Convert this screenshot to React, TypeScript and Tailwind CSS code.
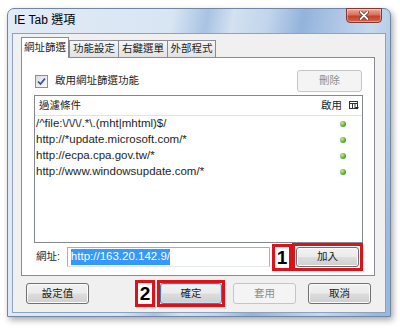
import React from 'react'
import clsx from 'clsx'

type BtnProps = {
  label: string
  disabled?: boolean
  focused?: boolean
  className?: string
}

const WinButton: React.FC<BtnProps> = ({ label, disabled, focused, className }) => (
  <div
    className={clsx(
      'flex items-center justify-center rounded-[3px] border text-[10.5px]',
      disabled && 'border-[#c3c6c9] bg-[#f4f4f4] text-[#8d8d8d]',
      !disabled &&
        'bg-[linear-gradient(#f2f2f2_0%,#ebebeb_48%,#dddddd_52%,#cfcfcf_100%)] text-[#1b1b1b]',
      !disabled && focused && 'border-[#3c7fb1] shadow-[inset_0_0_0_1px_#bfe3fa]',
      !disabled && !focused && 'border-[#707070] shadow-[inset_0_0_0_1px_#fbfbfb]',
      className,
    )}
  >
    {label}
  </div>
)

const Badge: React.FC<{ n: string }> = ({ n }) => (
  <div className="flex h-[27px] w-[20px] shrink-0 items-center justify-center border-[3px] border-[#dd1219] bg-white text-[19px] font-bold leading-none text-black">
    {n}
  </div>
)

const Dot = () => (
  <span className="block h-[6px] w-[6px] rounded-full bg-[radial-gradient(circle_at_35%_35%,#c4eea6_0%,#5fae37_55%,#2f6e19_100%)]" />
)

const rules = [
  '/^file:\\/\\/\\/.*\\.(mht|mhtml)$/',
  'http://*update.microsoft.com/*',
  'http://ecpa.cpa.gov.tw/*',
  'http://www.windowsupdate.com/*',
]

const tabs = [
  { label: '網址篩選', w: 'w-[48px]' },
  { label: '功能設定', w: 'w-[50px]' },
  { label: '右鍵選單', w: 'w-[50px] -ml-px' },
  { label: '外部程式', w: 'w-[49px] -ml-px' },
]

export default function App() {
  return (
    <div className="h-[329px] w-[400px] overflow-hidden bg-white pl-[7px] pt-[8px] font-['Liberation_Sans','Noto_Sans_CJK_TC',sans-serif] text-[#1e1e1e]">
      <div className="flex h-[309px] w-[384px] flex-col rounded-t-[7px] border border-[#6f87a5] bg-[linear-gradient(100deg,#e2ebf6_0%,#d8e5f3_38%,#a9c3e3_46%,#d3e1f1_52%,#c2d5ec_60%,#93b3db_68%,#aec6e5_76%,#c6d9ee_84%,#9ab8dd_97%)] px-[4px] pb-[3px] shadow-[2px_3px_6px_rgba(0,0,0,0.35)]">
        {/* title bar */}
        <div className="flex h-[24px] items-start justify-between">
          <span className="mt-[3px] pl-[2px] text-[12px] leading-[16px] text-black">IE Tab 選項</span>
          <div className="-mt-px mr-[4px] flex h-[15px] w-[36px] items-center justify-center rounded-b-[4px] border border-[#7b3a33] bg-[linear-gradient(#ebaa9c_0%,#d9715e_45%,#c24127_55%,#d2664c_100%)] shadow-[inset_0_0_0_1px_rgba(255,255,255,0.35)]">
            <svg width="10" height="9" viewBox="0 0 10 9">
              <path d="M1.5 1 L8.5 8 M8.5 1 L1.5 8" stroke="#5a1d16" strokeWidth="3.2" strokeLinecap="round" />
              <path d="M1.5 1 L8.5 8 M8.5 1 L1.5 8" stroke="#ffffff" strokeWidth="1.8" strokeLinecap="round" />
            </svg>
          </div>
        </div>

        {/* client area */}
        <div className="flex flex-1 flex-col border border-[#8da2bd] bg-[#f0f0f0] pt-[3px]">
          {/* tabs */}
          <div className="ml-[8px] flex h-[20px] items-end text-[10.5px]">
            {tabs.map((t, i) => (
              <div
                key={t.label}
                className={clsx(
                  'flex items-center justify-center border border-b-0 border-[#898c95]',
                  t.w,
                  i === 0
                    ? 'relative z-10 -mb-px h-[21px] bg-white'
                    : 'h-[17px] bg-[linear-gradient(#f5f5f5,#e2e2e2)]',
                )}
              >
                {t.label}
              </div>
            ))}
          </div>

          {/* tab page */}
          <div className="ml-[8px] flex h-[219px] w-[354px] flex-col border border-[#898c95] bg-white pl-[12px] pr-[11px] pt-[12px]">
            <div className="flex h-[22px] items-center justify-between">
              <div className="flex items-center">
                <span className="ml-px flex h-[13px] w-[13px] items-center justify-center border border-[#8e8f8f] bg-[linear-gradient(135deg,#dcdcdc,#fbfbfb)]">
                  <svg width="9" height="9" viewBox="0 0 9 9">
                    <path d="M1 4.5 L3.5 7 L8 1.5" fill="none" stroke="#3a4f8c" strokeWidth="1.7" />
                  </svg>
                </span>
                <span className="ml-[7px] text-[10.5px]">啟用網址篩選功能</span>
              </div>
              <WinButton label="刪除" disabled className="mr-px h-[22px] w-[65px]" />
            </div>

            <div className="mt-[3px] h-[148px] shrink-0 border border-[#828790] bg-white">
              <div className="flex h-[20px] items-center border-b border-[#e3e3e3] text-[10.5px]">
                <span className="ml-[4px] flex-1">過濾條件</span>
                <span>啟用</span>
                <svg className="ml-[7px] mr-[3px]" width="10" height="9" viewBox="0 0 10 9">
                  <rect x="0.5" y="0.5" width="8" height="7" fill="#fff" stroke="#333" />
                  <path d="M0.5 2.5 H8.5 M3.5 2.5 V7.5 M6 2.5 V7.5" stroke="#333" />
                  <path d="M6 6 H10 L8 8.5 Z" fill="#222" />
                </svg>
              </div>
              {rules.map((r) => (
                <div key={r} className="flex h-[16px] items-center text-[11.5px]">
                  <span className="ml-px flex-1 whitespace-nowrap">{r}</span>
                  <span className="mr-[16px]">
                    <Dot />
                  </span>
                </div>
              ))}
            </div>

            <div className="mt-[4px] flex h-[20px] shrink-0 items-center">
              <span className="ml-[2px] w-[31px] text-[10.5px]">網址:</span>
              <div className="flex h-[20px] w-[204px] items-stretch border border-[#abadb3] border-b-[#e3e9ef] bg-white py-px pl-[3px]">
                <span className="flex items-center bg-[#3399ff] text-[11.5px] text-white">http://163.20.142.9/</span>
              </div>
              <div className="ml-[2px]">
                <Badge n="1" />
              </div>
              <div className="border-[3px] border-[#dd1219] p-px">
                <WinButton label="加入" className="h-[20px] w-[63px]" />
              </div>
            </div>
          </div>

          {/* bottom buttons */}
          <div className="mt-[7px] flex h-[21px] items-center pl-[13px]">
            <WinButton label="設定值" className="h-[21px] w-[63px]" />
            <div className="ml-[46px]">
              <Badge n="2" />
            </div>
            <div className="ml-[2px] border-[3px] border-[#dd1219]">
              <WinButton label="確定" focused className="h-[21px] w-[62px]" />
            </div>
            <WinButton label="套用" disabled className="ml-[8px] h-[21px] w-[63px]" />
            <WinButton label="取消" className="ml-[12px] h-[21px] w-[63px]" />
          </div>
        </div>
      </div>
    </div>
  )
}
